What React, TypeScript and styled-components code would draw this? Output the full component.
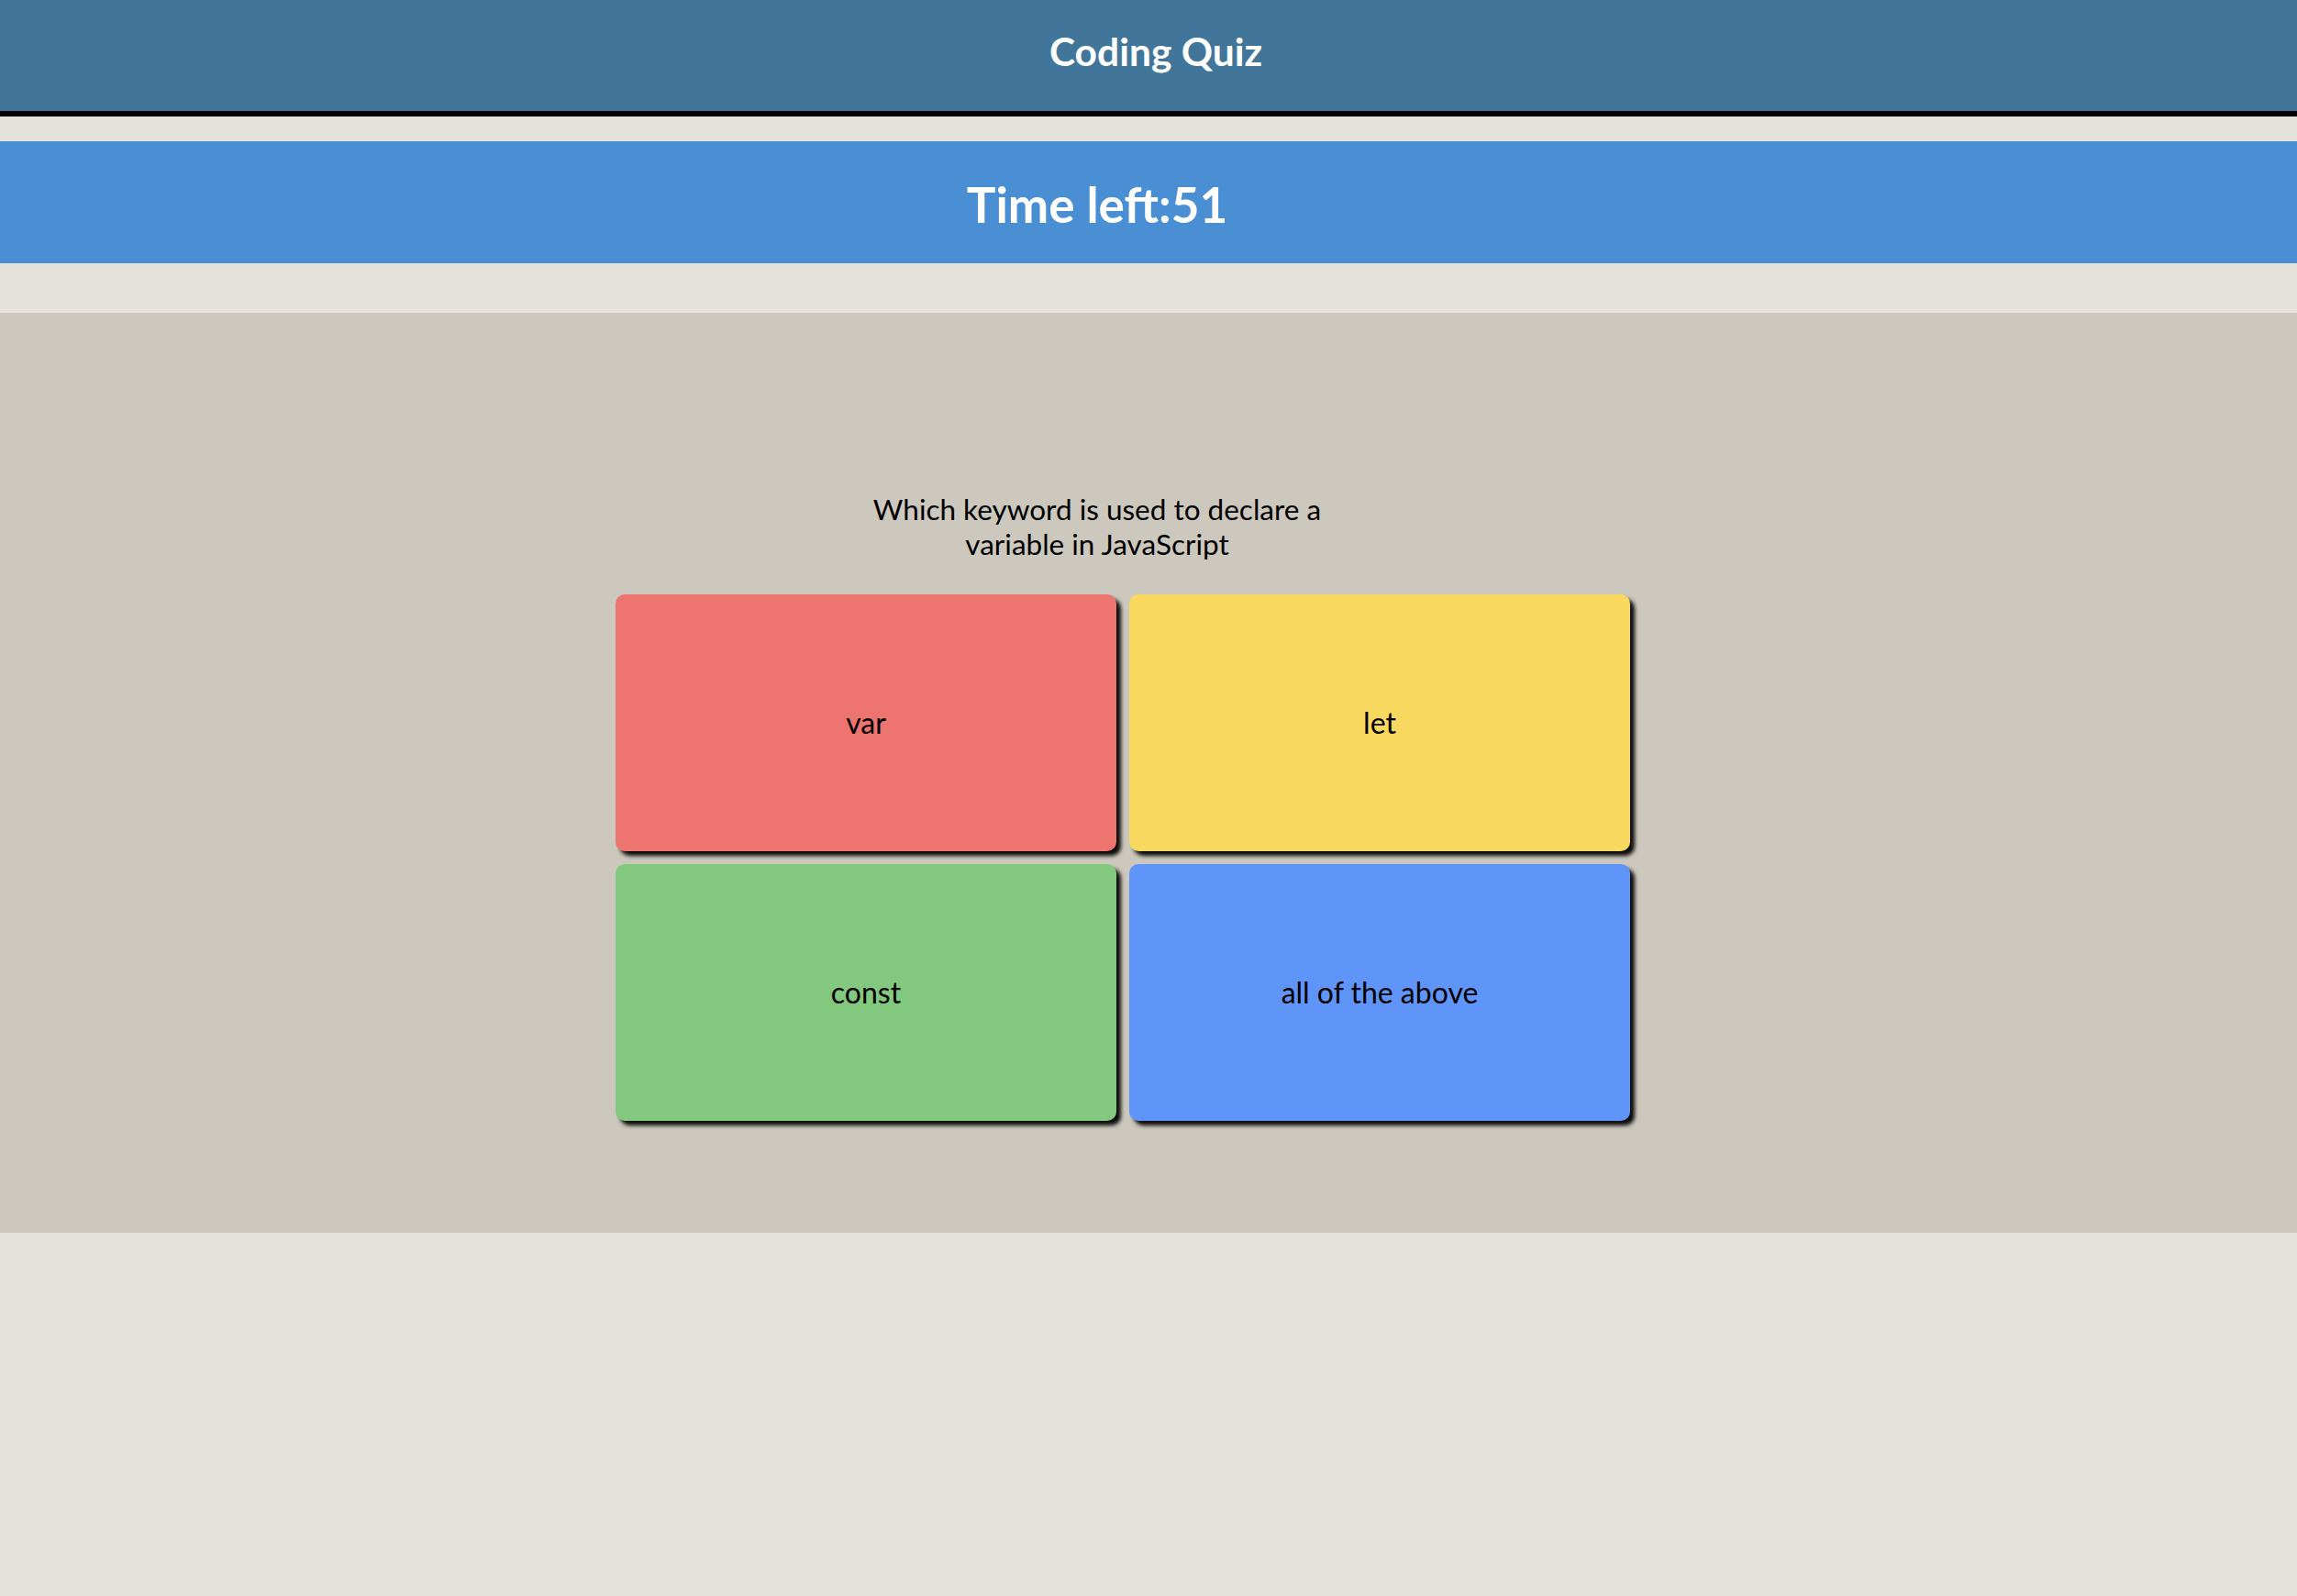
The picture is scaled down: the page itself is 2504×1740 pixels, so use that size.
import styled, { createGlobalStyle } from 'styled-components';

type Choice = { label: string; color: string };

const choices: Choice[] = [
  { label: 'var', color: '#ee7470' },
  { label: 'let', color: '#f8d85e' },
  { label: 'const', color: '#83c87f' },
  { label: 'all of the above', color: '#5f95f9' },
];

function App() {
  return (
    <>
      <GlobalStyle />
      <Page>
        <Header>
          <Title>Coding Quiz</Title>
        </Header>

        <TimerBar>
          <TimerText>Time left:51</TimerText>
        </TimerBar>

        <QuizSection>
          <Question>Which keyword is used to declare a variable in JavaScript</Question>
          <Choices>
            {choices.map((c) => (
              <ChoiceButton key={c.label} $bg={c.color}>
                {c.label}
              </ChoiceButton>
            ))}
          </Choices>
        </QuizSection>
      </Page>
    </>
  );
}

const GlobalStyle = createGlobalStyle`
    body {
      margin: 0;
      background: #e5e2dc;
      font-family: Lato, "Open Sans", sans-serif;
    }
  `,
  Page = styled.div`
    min-height: 100vh;
    background: #e5e2dc;
    display: flex;
    flex-direction: column;
  `,
  Header = styled.header`
    height: 91px;
    background: #41769a;
    border-bottom: 6px solid #000000;
    padding: 30px 0 0 16px;
    text-align: center;
  `,
  Title = styled.h1`
    margin: 0;
    font-size: 42.5px;
    line-height: 1.2;
    font-weight: 700;
    color: #ffffff;
  `,
  TimerBar = styled.div`
    margin-top: 27px;
    height: 133px;
    box-sizing: border-box;
    background: #4a8fd4;
    padding: 37px 112px 0 0;
    text-align: center;
  `,
  TimerText = styled.h2`
    margin: 0;
    font-size: 53px;
    line-height: 1.2;
    font-weight: 700;
    color: #ffffff;
  `,
  QuizSection = styled.section`
    margin-top: 54px;
    height: 1003px;
    box-sizing: border-box;
    background: #ccc8bd;
    padding-top: 196px;
    display: flex;
    flex-direction: column;
    align-items: center;
  `,
  Question = styled.p`
    margin: 0 112px 35px 0;
    width: 500px;
    text-align: center;
    font-size: 31.5px;
    line-height: 1.2;
    color: #000000;
  `,
  Choices = styled.div`
    margin-right: 56px;
    display: grid;
    grid-template-columns: 546px 546px;
    grid-template-rows: 280px 280px;
    gap: 14px;
  `,
  ChoiceButton = styled.button<{ $bg: string }>`
    border: none;
    border-radius: 10px;
    background: ${(p) => p.$bg};
    box-shadow: 5px 5px 4px rgba(0, 0, 0, 0.95);
    font-family: Lato, "Open Sans", sans-serif;
    font-size: 32px;
    color: #000000;
    cursor: pointer;
    display: flex;
    justify-content: center;
    align-items: center;
  `;

export default App;
